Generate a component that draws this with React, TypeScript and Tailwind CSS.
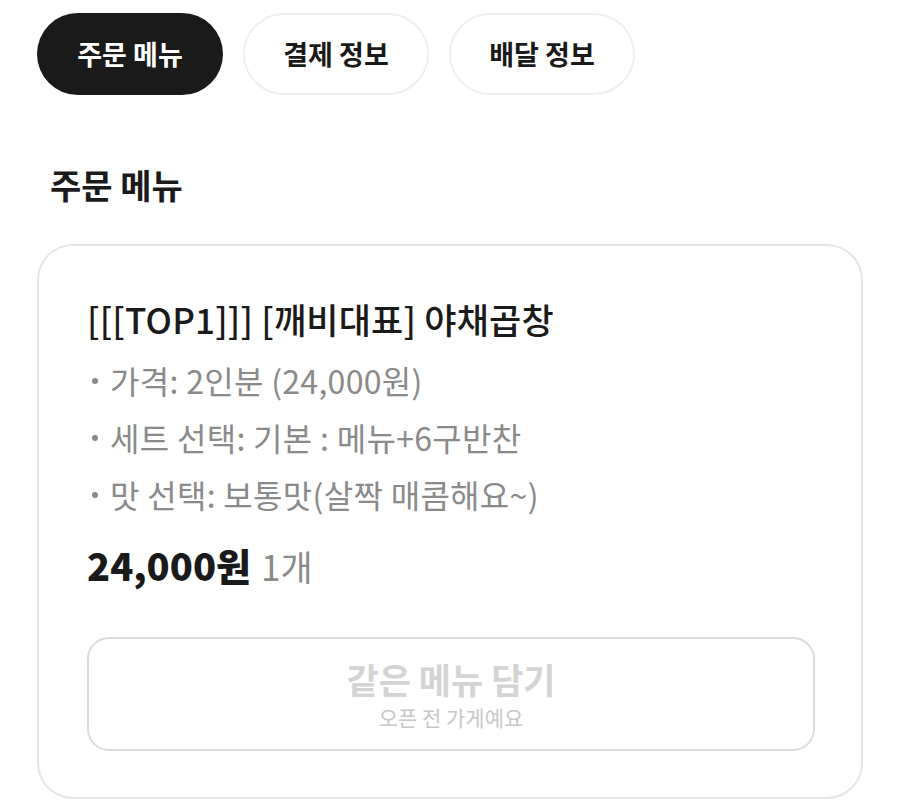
import React from 'react';

const TABS = ['주문 메뉴', '결제 정보', '배달 정보'];

const OPTIONS = [
  '가격: 2인분 (24,000원)',
  '세트 선택: 기본 : 메뉴+6구반찬',
  '맛 선택: 보통맛(살짝 매콤해요~)',
];

export default function App() {
  return (
    <div className="w-[900px] h-[812px] bg-white overflow-hidden font-['Noto_Sans_CJK_KR','Noto_Sans',sans-serif]">
      {/* tabs */}
      <div className="flex gap-5 px-[37px] pt-[13px]">
        {TABS.map((t, i) => (
          <button
            key={t}
            className={`w-[186px] h-[82px] rounded-full flex items-center justify-center text-[27px] font-bold ${
              i === 0 ? 'bg-[#1a1a1a] text-white' : 'bg-white text-[#1a1a1a] border-2 border-[#f0f0f0]'
            }`}
          >
            {t}
          </button>
        ))}
      </div>

      {/* heading */}
      <h2 className="mt-[66px] ml-[50px] text-[34px] font-bold text-[#1a1a1a] leading-[48px]">주문 메뉴</h2>

      {/* card */}
      <div className="mt-[35px] mx-[37px] h-[555px] rounded-[36px] border-2 border-[#e6e6e6] pl-[48px] pr-[46px] pt-[43px]">
        <div className="text-[35px] font-medium text-[#1a1a1a] leading-[60px] tracking-[0.2px]">[[[TOP1]]] [깨비대표] 야채곱창</div>
        <ul className="mt-[3px]">
          {OPTIONS.map(o => (
            <li key={o} className="flex items-center text-[32px] text-[#8a8a8a] leading-[57px] tracking-[0.3px]">
              <span className="w-[6px] h-[6px] rounded-full bg-[#8a8a8a] ml-[5px] mr-[12px]" />
              {o}
            </li>
          ))}
        </ul>
        <div className="mt-[12px] text-[38px] leading-[60px]">
          <span className="font-black text-[#1a1a1a]">24,000원</span>
          <span className="text-[#8a8a8a] ml-[10px] text-[35px]">1개</span>
        </div>
        <div className="mt-[41px] h-[114px] rounded-[22px] border-2 border-[#dcdcdc] flex flex-col items-center justify-center">
          <div className="text-[35px] font-bold text-[#d4d4d4] leading-[46px]">같은 메뉴 담기</div>
          <div className="text-[21px] text-[#c8c8c8] leading-[30px]">오픈 전 가게예요</div>
        </div>
      </div>
    </div>
  );
}
